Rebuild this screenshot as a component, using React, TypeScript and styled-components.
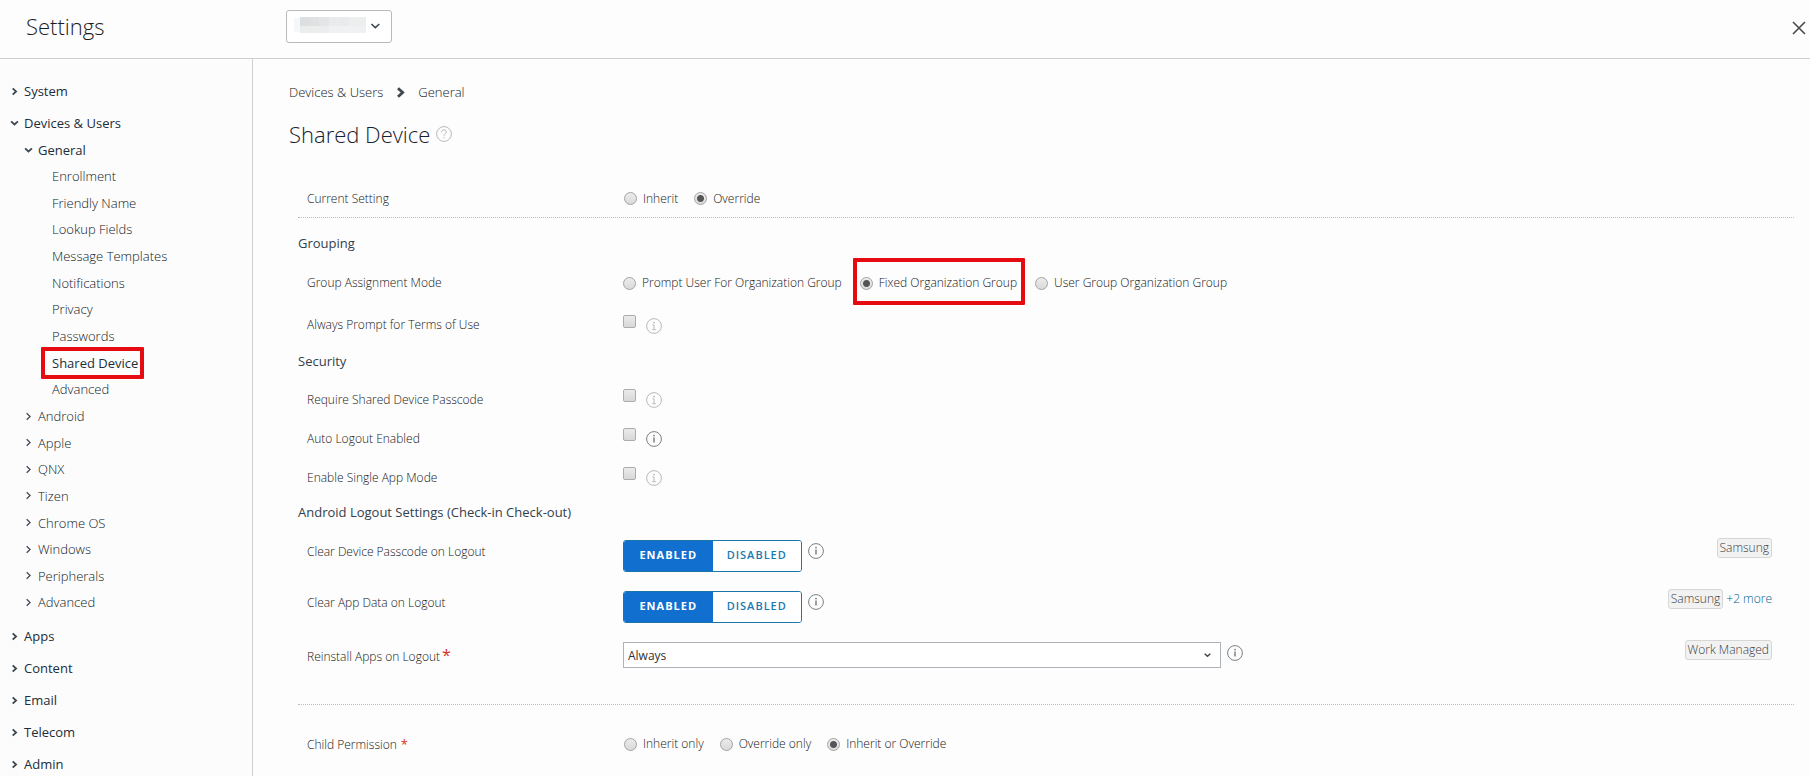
import React from "react";
import styled, { createGlobalStyle, css } from "styled-components";

const Global = createGlobalStyle`
  *, *::before, *::after { box-sizing: border-box; }
  body {
    margin: 0;
    background: #fdfdfd;
    color: #161616;
    font-family: "Open Sans", "Noto Sans", sans-serif;
    font-size: 12px;
    font-weight: 300;
    line-height: 20px;
  }
  button, select, input { font-family: inherit; font-weight: inherit; margin: 0; }
  ul { list-style: none; margin: 0; padding: 0; }
`;

const Shell = styled.div`
  display: flex;
  flex-direction: column;
  height: 100vh;
`;

const Header = styled.header`
  display: flex;
  align-items: flex-start;
  flex: none;
  height: 59px;
  border-bottom: 1px solid #cfcfcf;
`;

const HeaderTitle = styled.h1`
  flex: none;
  width: 286px;
  margin: 0;
  padding: 10px 0 0 26px;
  font-size: 22px;
  line-height: 32px;
  font-weight: 300;
  color: #1c1c1c;
`;

const GroupButton = styled.button`
  display: flex;
  align-items: center;
  gap: 3px;
  width: 106px;
  height: 33px;
  margin-top: 10px;
  padding: 0 9px 0 7px;
  border: 1px solid #b9b9b9;
  border-radius: 3px;
  background: #fff;
`;

const CloseButton = styled.button`
  display: flex;
  margin: 20px 3px 0 auto;
  padding: 0;
  border: 0;
  background: none;
`;

const Body = styled.div`
  display: flex;
  flex: 1;
  min-height: 0;
`;

const Sidebar = styled.nav`
  flex: none;
  width: 253px;
  padding-top: 16px;
  border-right: 1px solid #cfcfcf;
  background: #fcfcfd;
  overflow-y: auto;
  scrollbar-width: none;
`;

const OpenGroup = styled.div`
  margin: -2px 0 4px;
`;

const SubList = styled.ul<{ $height: number }>`
  display: grid;
  grid-auto-rows: 1fr;
  height: ${(p) => p.$height}px;
`;

function markBox(inset: string) {
  return css`
    &::after {
      content: "";
      position: absolute;
      inset: ${inset};
      border: 4px solid #e60b10;
      border-radius: 1px;
    }
  `;
}

const SidebarLink = styled.a<{ $level: number; $strong?: boolean; $marked?: boolean }>`
  position: relative;
  display: flex;
  align-items: center;
  width: fit-content;
  height: ${(p) => (p.$level === 0 ? 32 : 26)}px;
  margin-left: ${(p) => (p.$level === 0 ? 9 : p.$level === 1 ? 23 : 52)}px;
  gap: 4px;
  font-size: 13px;
  font-weight: ${(p) => (p.$strong ? 500 : 300)};
  color: ${(p) => (p.$strong ? "#222d38" : "#101922")};
  text-decoration: none;
  white-space: nowrap;
  ${(p) => p.$marked && markBox("-3px -6px -3px -11px")}
`;

const Main = styled.main`
  flex: 1;
  min-width: 0;
  padding: 23px 16px 0 36px;
  overflow-y: auto;
  scrollbar-width: none;
`;

const Breadcrumb = styled.div`
  display: flex;
  align-items: center;
  gap: 10px;
  font-size: 13px;
  color: #101922;
`;

const TitleRow = styled.div`
  display: flex;
  align-items: center;
  gap: 6px;
  margin-top: 16px;
`;

const Title = styled.h2`
  margin: 0;
  font-size: 22px;
  line-height: 32px;
  font-weight: 300;
  color: #17222d;
`;

const Form = styled.form`
  margin: 30px 0 0 9px;
`;

const Section = styled.h3<{ $gap?: number }>`
  margin: ${(p) => p.$gap ?? 0}px 0 3px;
  font-size: 13px;
  line-height: 31px;
  font-weight: 500;
  color: #33404c;
`;

const Row = styled.div<{ $height: number; $top?: boolean; $ruled?: boolean }>`
  display: flex;
  align-items: ${(p) => (p.$top ? "flex-start" : "center")};
  min-height: ${(p) => p.$height}px;
  padding: ${(p) => (p.$top ? "9px 22px 0 9px" : "0 22px 0 9px")};
  border: 0 dotted #bdbdbd;
  border-bottom-width: ${(p) => (p.$ruled ? 1 : 0)}px;
`;

const Caption = styled.span<{ $line?: number }>`
  flex: none;
  width: 316px;
  line-height: ${(p) => p.$line ?? 24}px;
`;

const Required = styled.span<{ $large?: boolean }>`
  color: #d9301f;
  font-size: ${(p) => (p.$large ? 16 : 13)}px;
  font-weight: 400;
  margin-left: ${(p) => (p.$large ? 2 : 4)}px;
`;

const Options = styled.div<{ $gap?: number; $indent?: boolean }>`
  display: flex;
  gap: ${(p) => p.$gap ?? 16}px;
  padding-left: ${(p) => (p.$indent ? 1 : 0)}px;
`;

const Option = styled.label<{ $marked?: boolean }>`
  position: relative;
  display: flex;
  align-items: center;
  gap: 6px;
  white-space: nowrap;
  ${(p) => p.$marked && markBox("-15px -8px -12px -7px")}
`;

const Radio = styled.input.attrs({ type: "radio" })`
  appearance: none;
  flex: none;
  width: 13px;
  height: 13px;
  border: 1px solid #a3a3a3;
  border-radius: 50%;
  background: linear-gradient(#ececec, #d9d9d9);
  &:checked {
    background: radial-gradient(circle, #555 0 3px, transparent 4px), linear-gradient(#ececec, #dcdcdc);
  }
`;

const Checkbox = styled.input.attrs({ type: "checkbox" })`
  appearance: none;
  width: 13px;
  height: 13px;
  border: 1px solid #acacac;
  border-radius: 2px;
  background: linear-gradient(#ebebeb, #d8d8d8);
`;

const InfoButton = styled.button<{ $dim?: boolean }>`
  display: flex;
  flex: none;
  padding: 0;
  border: 0;
  background: none;
  color: ${(p) => (p.$dim ? "#b9b9b9" : "#7b8085")};
`;

const CheckField = styled.div`
  display: flex;
  align-items: flex-start;
  gap: 10px;
  height: 21px;
  ${InfoButton} { margin-top: 3px; }
`;

const ControlGroup = styled.div`
  display: flex;
  flex: 0 1 auto;
  align-items: flex-start;
  gap: 6px;
  min-width: 0;
  ${InfoButton} { margin-top: 3px; }
`;

const Toggle = styled.div`
  display: flex;
  width: 179px;
  height: 32px;
  border: 1px solid #1c74a8;
  border-radius: 3px;
  overflow: hidden;
  background: #fff;
`;

const ToggleButton = styled.button<{ $on?: boolean }>`
  flex: 1;
  padding: 0 0 2px;
  border: 0;
  background: ${(p) => (p.$on ? "#116fd0" : "#fff")};
  color: ${(p) => (p.$on ? "#fff" : "#1a7ab0")};
  font-size: 11px;
  line-height: 16px;
  font-weight: ${(p) => (p.$on ? 700 : 600)};
  letter-spacing: 1px;
`;

const SelectWrap = styled.div`
  display: grid;
  flex: 0 1 598px;
  width: 598px;
  align-items: center;
  > * { grid-area: 1 / 1; }
  > svg { justify-self: end; margin-right: 9px; pointer-events: none; }
`;

const Select = styled.select`
  appearance: none;
  width: 100%;
  height: 26px;
  padding: 0 4px;
  border: 1px solid #adb3b9;
  border-radius: 0;
  background: #fff;
  color: #333;
  font-size: 12px;
  font-weight: 400;
`;

const Tags = styled.div`
  display: flex;
  align-items: center;
  gap: 3px;
  margin: -2px 0 0 auto;
`;

const Tag = styled.span`
  padding: 0 2px;
  border: 1px solid #d6d6d6;
  border-radius: 3px;
  background: #f2f2f2;
  color: #3a3a3a;
  line-height: 18px;
`;

const MoreLink = styled.a`
  color: #005f94;
  text-decoration: none;
`;

function Chevron({ down, size = 9, width = 1.5, color = "#3f474f" }: { down?: boolean; size?: number; width?: number; color?: string }) {
  return (
    <svg width={size} height={size} viewBox="0 0 9 9" fill="none" stroke={color} strokeWidth={width}>
      <path d={down ? "M1.7 2.7 4.5 5.3 7.3 2.7" : "M3 1.9 5.8 4.5 3 7.1"} />
    </svg>
  );
}

function Info({ dim, topic }: { dim?: boolean; topic: string }) {
  return (
    <InfoButton type="button" $dim={dim} aria-label={`About ${topic}`}>
      <svg width="16" height="16" viewBox="0 0 16 16" fill="none" stroke="currentColor">
        <circle cx="8" cy="8" r="7.4" strokeWidth="1" />
        <circle cx="8" cy="4.6" r="0.9" fill="currentColor" stroke="none" />
        <path d={dim ? "M6.5 6.9H8v4.8M6.2 11.7h3.6" : "M8 6.6v5"} strokeWidth={dim ? 1 : 1.5} />
      </svg>
    </InfoButton>
  );
}

const blocks = ["#dcdfe1", "#dfe1e3", "#e3e5e6", "#e9ebec", "#e8eaeb", "#eceeef", "#edefef"];

const leaves = ["Enrollment", "Friendly Name", "Lookup Fields", "Message Templates", "Notifications", "Privacy", "Passwords", "Shared Device", "Advanced"];
const platforms = ["Android", "Apple", "QNX", "Tizen", "Chrome OS", "Windows", "Peripherals", "Advanced"];

function TopItem({ name, open }: { name: string; open?: boolean }) {
  return (
    <SidebarLink href="#" $level={0} $strong>
      <Chevron down={open} size={11} />
      {name}
    </SidebarLink>
  );
}

function Choices({ name, options, value, mark, gap, indent }: { name: string; options: string[]; value: string; mark?: string; gap?: number; indent?: boolean }) {
  return (
    <Options $gap={gap} $indent={indent} role="radiogroup" aria-label={name}>
      {options.map((o) => (
        <Option key={o} $marked={o === mark}>
          <Radio name={name} defaultChecked={o === value} />
          {o}
        </Option>
      ))}
    </Options>
  );
}

function CheckRow({ label, height, dim }: { label: string; height: number; dim?: boolean }) {
  const id = label.replace(/ /g, "-").toLowerCase();
  return (
    <Row $height={height}>
      <Caption as="label" htmlFor={id}>{label}</Caption>
      <CheckField>
        <Checkbox id={id} />
        <Info dim={dim} topic={label} />
      </CheckField>
    </Row>
  );
}

function ToggleRow({ label, children }: { label: string; children: React.ReactNode }) {
  return (
    <Row $height={51} $top>
      <Caption>{label}</Caption>
      <ControlGroup>
        <Toggle role="group" aria-label={label}>
          <ToggleButton type="button" $on aria-pressed="true">ENABLED</ToggleButton>
          <ToggleButton type="button" aria-pressed="false">DISABLED</ToggleButton>
        </Toggle>
        <Info topic={label} />
      </ControlGroup>
      <Tags>{children}</Tags>
    </Row>
  );
}

export default function App() {
  return (
    <Shell>
      <Global />
      <Header>
        <HeaderTitle>Settings</HeaderTitle>
        <GroupButton type="button" aria-label="Organization group">
          <svg width="74" height="20" viewBox="0 0 74 20" shapeRendering="crispEdges">
            <rect x="0" y="1" width="6" height="14" fill="#f6f7f8" />
            {blocks.map((c, i) => (
              <g key={i}>
                <rect x={6 + i * 10} y="0" width="10" height="9" fill={c} />
                <rect x={6 + i * 10} y="9" width="10" height="7" fill={i < 3 ? "#eceeee" : "#f0f1f2"} />
              </g>
            ))}
          </svg>
          <Chevron down size={13} width={1.1} />
        </GroupButton>
        <CloseButton type="button" aria-label="Close">
          <svg width="16" height="16" viewBox="0 0 16 16" stroke="#4a4a4a" strokeWidth="1.6">
            <path d="M2 2 14 14M14 2 2 14" />
          </svg>
        </CloseButton>
      </Header>
      <Body>
        <Sidebar aria-label="Settings">
          <ul>
            <li><TopItem name="System" /></li>
            <li>
              <TopItem name="Devices & Users" open />
              <OpenGroup>
                <ul>
                  <li>
                    <SidebarLink href="#" $level={1} $strong>
                      <Chevron down size={11} />
                      General
                    </SidebarLink>
                    <SubList $height={240}>
                      {leaves.map((l) => (
                        <li key={l}>
                          <SidebarLink href="#" $level={2} $strong={l === "Shared Device"} $marked={l === "Shared Device"}>
                            {l}
                          </SidebarLink>
                        </li>
                      ))}
                    </SubList>
                  </li>
                </ul>
                <SubList $height={213}>
                  {platforms.map((p) => (
                    <li key={p}>
                      <SidebarLink href="#" $level={1}>
                        <Chevron size={11} width={1} />
                        {p}
                      </SidebarLink>
                    </li>
                  ))}
                </SubList>
              </OpenGroup>
            </li>
            {["Apps", "Content", "Email", "Telecom", "Admin"].map((n) => (
              <li key={n}><TopItem name={n} /></li>
            ))}
          </ul>
        </Sidebar>
        <Main>
          <Breadcrumb>
            <span>Devices &amp; Users</span>
            <Chevron size={15} width={1.7} />
            <span>General</span>
          </Breadcrumb>
          <TitleRow>
            <Title>Shared Device</Title>
            <InfoButton type="button" $dim aria-label="Help">
              <svg width="16" height="16" viewBox="0 0 16 16" fill="none" stroke="currentColor">
                <circle cx="8" cy="8" r="7.4" />
                <path d="M5.6 6.2C5.6 4.7 6.6 3.9 8 3.9s2.4.8 2.4 2.1C10.4 7.6 8 7.7 8 9.8M8 11v1.3" />
              </svg>
            </InfoButton>
          </TitleRow>
          <Form>
            <Row $height={38} $ruled>
              <Caption>Current Setting</Caption>
              <Choices name="Current Setting" options={["Inherit", "Override"]} value="Override" indent />
            </Row>
            <Section $gap={10}>Grouping</Section>
            <Row $height={42}>
              <Caption>Group Assignment Mode</Caption>
              <Choices
                name="Group Assignment Mode"
                options={["Prompt User For Organization Group", "Fixed Organization Group", "User Group Organization Group"]}
                value="Fixed Organization Group"
                mark="Fixed Organization Group"
                gap={18}
              />
            </Row>
            <CheckRow label="Always Prompt for Terms of Use" height={42} dim />
            <Section>Security</Section>
            <CheckRow label="Require Shared Device Passcode" height={39} dim />
            <CheckRow label="Auto Logout Enabled" height={39} />
            <CheckRow label="Enable Single App Mode" height={39} dim />
            <Section>Android Logout Settings (Check-in Check-out)</Section>
            <ToggleRow label="Clear Device Passcode on Logout">
              <Tag>Samsung</Tag>
            </ToggleRow>
            <ToggleRow label="Clear App Data on Logout">
              <Tag>Samsung</Tag>
              <MoreLink href="#">+2 more</MoreLink>
            </ToggleRow>
            <Row $height={72} $top $ruled>
              <Caption as="label" htmlFor="reinstall" $line={26}>
                Reinstall Apps on Logout<Required $large>*</Required>
              </Caption>
              <ControlGroup>
                <SelectWrap>
                  <Select id="reinstall" defaultValue="Always">
                    <option>Always</option>
                  </Select>
                  <Chevron down />
                </SelectWrap>
                <Info topic="Reinstall Apps on Logout" />
              </ControlGroup>
              <Tags>
                <Tag>Work Managed</Tag>
              </Tags>
            </Row>
            <Row $height={78}>
              <Caption>Child Permission<Required>*</Required></Caption>
              <Choices name="Child Permission" options={["Inherit only", "Override only", "Inherit or Override"]} value="Inherit or Override" indent />
            </Row>
          </Form>
        </Main>
      </Body>
    </Shell>
  );
}
